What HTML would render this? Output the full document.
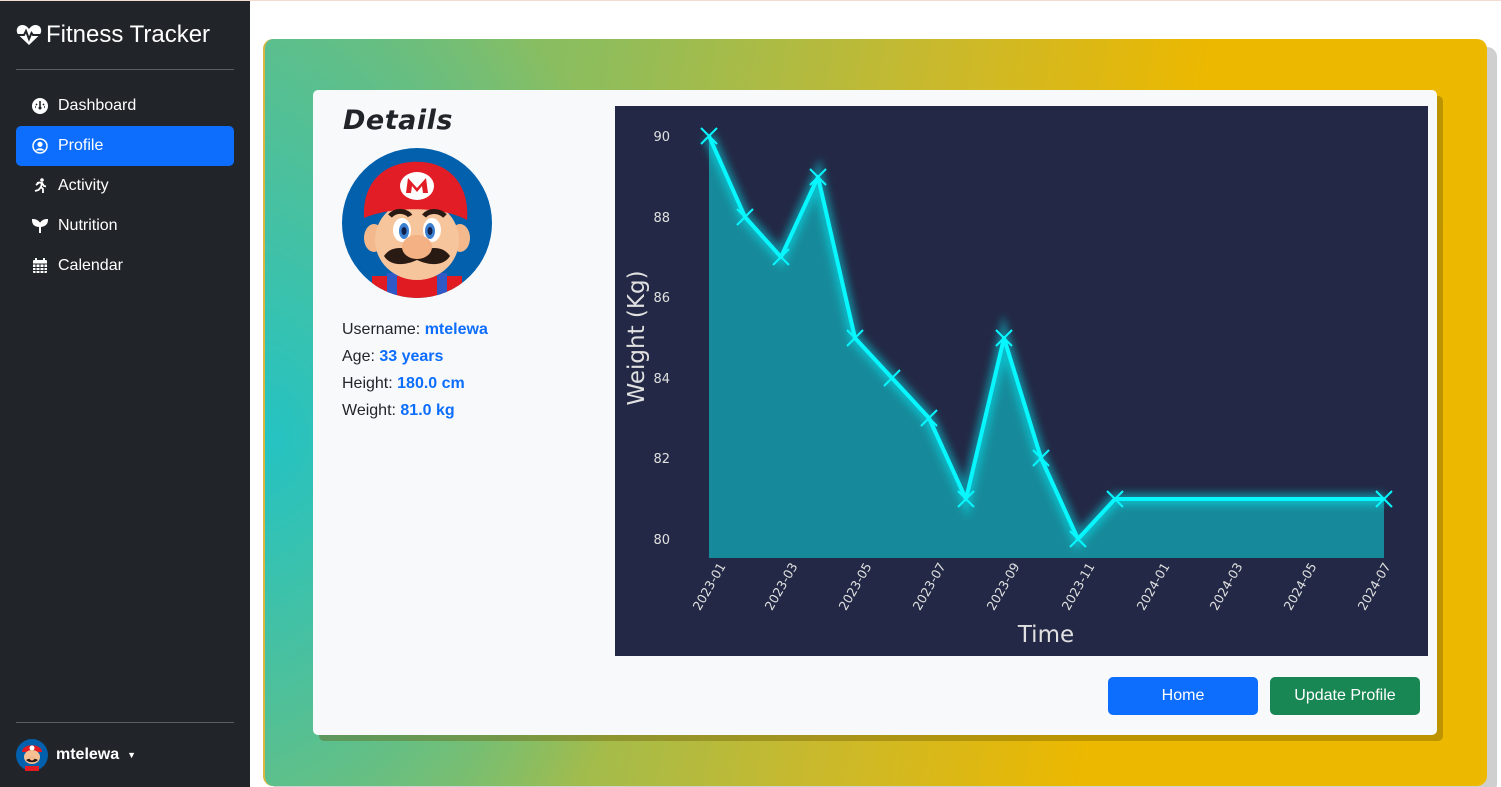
<!DOCTYPE html>
<html><head><meta charset="utf-8">
<style>
*{box-sizing:border-box;margin:0;padding:0}
body{width:1501px;height:787px;overflow:hidden;background:#fff;font-family:"Liberation Sans",sans-serif;position:relative}
.topline{position:absolute;left:0;top:0;width:1501px;height:1px;background:#f3dccf}
.side{position:absolute;left:0;top:1px;width:250px;height:786px;background:#212529;color:#fff}
.brand{position:absolute;left:16px;top:20px;font-size:24px;display:flex;align-items:center;gap:4px}
.hr{position:absolute;left:16px;width:218px;height:1px;background:#5c6064}
.nav{position:absolute;left:16px;width:218px;height:40px;border-radius:5px;display:flex;align-items:center;padding-left:16px;font-size:16px;gap:10px}
.nav.act{background:#0d6efd}
.nav svg{width:16px;height:16px}
.user{position:absolute;left:16px;top:738px;display:flex;align-items:center;gap:8px;font-weight:bold;font-size:16px}
.outer{position:absolute;left:263px;top:39px;width:1224px;height:747px;border-radius:10px;
background:radial-gradient(ellipse 420px 520px at 0px 400px,#24c3c3 0%,rgba(36,195,195,0) 100%),linear-gradient(100deg,#6bbe7d 0%,#8fbd5b 25%,#c9b92d 50%,#ecb800 70%,#edb800 100%);
box-shadow:10px 8px 0 #cfcfcf;border-left:2px solid #d8b640}
.card{position:absolute;left:313px;top:90px;width:1124px;height:645px;background:#f8f9fa;border-radius:5px;box-shadow:6px 6px 0 rgba(100,80,0,.35)}
h2{position:absolute;left:343px;top:105px;font-family:"DejaVu Sans",sans-serif;font-style:italic;font-weight:bold;font-size:27px;color:#212529;letter-spacing:0.5px}
.info{position:absolute;left:342px;top:316px;font-size:16px;line-height:27px;color:#212529}
.info b{color:#0d6efd}
.btn{position:absolute;top:677px;width:150px;height:38px;border-radius:5px;color:#fff;font-size:16px;display:flex;align-items:center;justify-content:center}
</style></head><body>
<div class="topline"></div>
<div class="side">
 <div class="brand"><svg width="26" height="22" viewBox="0 0 26 22"><path d="M13 21 L2.5 11 C-1 7 1 1 6.5 1 C9.5 1 11.5 3 13 5 C14.5 3 16.5 1 19.5 1 C25 1 27 7 23.5 11 Z" fill="#fff"/><path d="M2 11 H8 L10 7 L13 15 L15.5 9 L17 11 H24" stroke="#212529" stroke-width="2" fill="none"/></svg>Fitness Tracker</div>
 <div class="hr" style="top:68px"></div>
 <div class="nav" style="top:85px"><svg viewBox="0 0 16 16"><circle cx="8" cy="8" r="8" fill="#fff"/><path d="M8 3v6M4 6l1 1M12 6l-1 1M3 9h1M12 9h1" stroke="#212529" stroke-width="1.6"/><circle cx="8" cy="10" r="1.5" fill="#212529"/></svg>Dashboard</div>
 <div class="nav act" style="top:125px"><svg viewBox="0 0 16 16"><circle cx="8" cy="8" r="7" fill="none" stroke="#fff" stroke-width="1.5"/><circle cx="8" cy="6.3" r="2.6" fill="#fff"/><path d="M3.5 12.5 C5 9.5 11 9.5 12.5 12.5" fill="#fff"/></svg>Profile</div>
 <div class="nav" style="top:165px"><svg viewBox="0 0 16 16"><circle cx="10" cy="2" r="1.8" fill="#fff"/><path d="M4 7 L7 4.5 L10 5 L9 9 L11 11 L11 15 M9 9 L6.5 12 L3 13 M10 5 L12 8 L14 8.5 M7 4.5 L5 5" stroke="#fff" stroke-width="1.8" fill="none"/></svg>Activity</div>
 <div class="nav" style="top:205px"><svg viewBox="0 0 16 16"><path d="M8 15 V8 C8 4 4 2 1 2 C1 6 3 8 8 8 C8 5 11 2 15 2 C15 6 12 8 8 8" fill="#fff" stroke="#fff" stroke-width="2"/></svg>Nutrition</div>
 <div class="nav" style="top:245px"><svg viewBox="0 0 16 16"><rect x="1" y="2" width="14" height="13" rx="1" fill="#fff"/><path d="M4 0v3M12 0v3" stroke="#fff" stroke-width="2"/><path d="M1 6h14M4 6v9M8 6v9M12 6v9M1 9.5h14M1 12.5h14" stroke="#212529" stroke-width="1"/></svg>Calendar</div>
 <div class="hr" style="top:721px"></div>
 <div class="user"><svg width="32" height="32" viewBox="0 0 32 32"><circle cx="16" cy="16" r="16" fill="#0260ad"/><path d="M6 13 C6 4 26 4 26 13 Z" fill="#e21b23"/><circle cx="16" cy="9" r="2.5" fill="#fff"/><ellipse cx="16" cy="18" rx="8" ry="7" fill="#f5c094"/><path d="M10 21 C13 19 19 19 22 21 C19 24 13 24 10 21Z" fill="#2a1a14"/><circle cx="16" cy="19" r="2.5" fill="#f4b98a"/><rect x="9" y="27" width="14" height="5" fill="#e21b23"/></svg>mtelewa <span style="font-size:9px">▼</span></div>
</div>
<div class="outer"></div>
<div class="card"></div>
<h2>Details</h2>
<svg style="position:absolute;left:342px;top:148px" width="150" height="150" viewBox="0 0 150 150">
 <defs><clipPath id="c"><circle cx="75" cy="75" r="75"/></clipPath></defs>
 <g clip-path="url(#c)">
 <rect width="150" height="150" fill="#0260ad"/>
 <rect x="30" y="128" width="90" height="30" fill="#e11b22"/>
 <rect x="45" y="125" width="10" height="30" fill="#2f59c6"/><rect x="95" y="125" width="10" height="30" fill="#2f59c6"/>
 <ellipse cx="32" cy="90" rx="10" ry="14" fill="#f3b98d"/><ellipse cx="118" cy="90" rx="10" ry="14" fill="#f3b98d"/>
 <ellipse cx="75" cy="92" rx="42" ry="40" fill="#f7c59c"/>
 <path d="M22 70 C20 20 60 12 80 14 C110 16 128 40 125 72 C100 58 50 58 22 70Z" fill="#e21d25"/>
 <ellipse cx="75" cy="38" rx="17" ry="14" fill="#fff"/>
 <path d="M64 45 L66 30 L75 40 L84 30 L86 45 L81 45 L80 38 L75 44 L70 38 L69 45Z" fill="#e21d25"/>
 <ellipse cx="60" cy="82" rx="9" ry="12" fill="#fff"/><ellipse cx="90" cy="82" rx="9" ry="12" fill="#fff"/>
 <ellipse cx="62" cy="83" rx="5" ry="8" fill="#3a7fd0"/><ellipse cx="88" cy="83" rx="5" ry="8" fill="#3a7fd0"/>
 <ellipse cx="62" cy="83" rx="2.5" ry="4" fill="#10204a"/><ellipse cx="88" cy="83" rx="2.5" ry="4" fill="#10204a"/>
 <path d="M48 68 C55 60 66 64 68 68 M82 68 C86 63 96 61 103 68" stroke="#2a1a14" stroke-width="5" fill="none"/>
 <path d="M42 108 C50 96 65 100 75 104 C85 100 100 96 108 108 C102 118 88 118 75 112 C62 118 48 118 42 108Z" fill="#2a1a14"/>
 <ellipse cx="75" cy="99" rx="15" ry="12" fill="#f4b184"/>
 </g>
</svg>
<div class="info">Username: <b>mtelewa</b><br>Age: <b>33 years</b><br>Height: <b>180.0 cm</b><br>Weight: <b>81.0 kg</b></div>

<svg style="position:absolute;left:615px;top:106px" width="813" height="550" viewBox="615 106 813 550" font-family="DejaVu Sans, sans-serif">
 <defs><filter id="g" x="-10%" y="-10%" width="120%" height="120%"><feGaussianBlur stdDeviation="4"/></filter></defs>
 <rect x="615" y="106" width="813" height="550" fill="#222845"/>
 <polygon fill="#168a9a" points="709,136 745,217 781,257 818,177 855,338 892,378 929,418 966,499 1004,338 1041,458 1078,539 1115,499 1384,499 1384,558 709,558"/>
 <polyline fill="none" stroke="#08f7fe" stroke-opacity="0.45" stroke-width="12" filter="url(#g)" points="709,136 745,217 781,257 818,177 855,338 892,378 929,418 966,499 1004,338 1041,458 1078,539 1115,499 1384,499"/>
 <polyline fill="none" stroke="#08f7fe" stroke-width="4" stroke-linejoin="round" points="709,136 745,217 781,257 818,177 855,338 892,378 929,418 966,499 1004,338 1041,458 1078,539 1115,499 1384,499"/>
 <g stroke="#08f7fe" stroke-width="2">
 <path d="M701,128l16,16M717,128l-16,16 M737,209l16,16M753,209l-16,16 M773,249l16,16M789,249l-16,16 M810,169l16,16M826,169l-16,16 M847,330l16,16M863,330l-16,16 M884,370l16,16M900,370l-16,16 M921,410l16,16M937,410l-16,16 M958,491l16,16M974,491l-16,16 M996,330l16,16M1012,330l-16,16 M1033,450l16,16M1049,450l-16,16 M1070,531l16,16M1086,531l-16,16 M1107,491l16,16M1123,491l-16,16 M1376,491l16,16M1392,491l-16,16"/>
 </g>
 <g fill="#e0e0e0" font-size="13" text-anchor="end">
 <text x="670" y="141">90</text><text x="670" y="222">88</text><text x="670" y="302">86</text><text x="670" y="383">84</text><text x="670" y="463">82</text><text x="670" y="544">80</text>
 </g>
 <g fill="#e0e0e0" font-size="12.5" text-anchor="end">
 <text transform="translate(726,566) rotate(-60)">2023-01</text>
 <text transform="translate(798,566) rotate(-60)">2023-03</text>
 <text transform="translate(872,566) rotate(-60)">2023-05</text>
 <text transform="translate(946,566) rotate(-60)">2023-07</text>
 <text transform="translate(1020,566) rotate(-60)">2023-09</text>
 <text transform="translate(1095,566) rotate(-60)">2023-11</text>
 <text transform="translate(1170,566) rotate(-60)">2024-01</text>
 <text transform="translate(1243,566) rotate(-60)">2024-03</text>
 <text transform="translate(1317,566) rotate(-60)">2024-05</text>
 <text transform="translate(1391,566) rotate(-60)">2024-07</text>
 </g>
 <text x="1046" y="642" fill="#e0e0e0" font-size="23" text-anchor="middle">Time</text>
 <text transform="translate(644,338) rotate(-90)" fill="#e0e0e0" font-size="23" text-anchor="middle">Weight (Kg)</text>
</svg>

<div class="btn" style="left:1108px;background:#0d6efd">Home</div>
<div class="btn" style="left:1270px;background:#198754">Update Profile</div>
</body></html>
